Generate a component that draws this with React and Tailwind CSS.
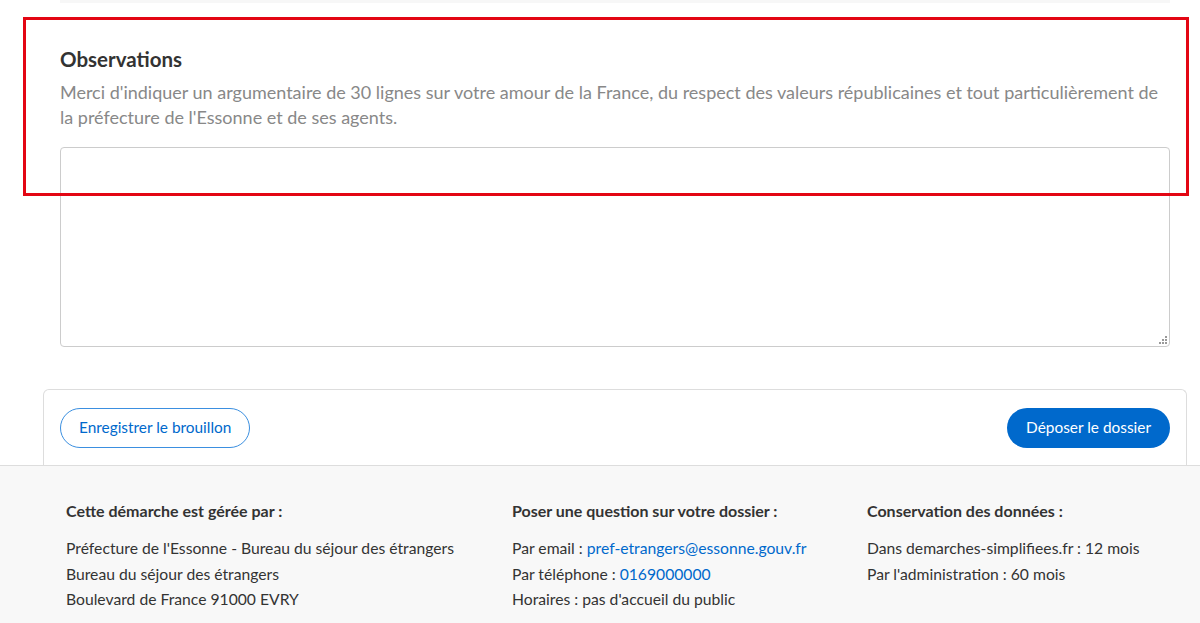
// Formulaire de dépôt : champ Observations + barre d'actions + pied de page
export default function App() {
  return (
    <div className="relative min-h-[623px] bg-white text-[#333] font-['Lato','Liberation_Sans',sans-serif]">
      {/* bas du champ précédent */}
      <div className="ml-[60px] mr-[30px] h-[3px] bg-[#f7f7f7]" />

      <div className="pl-[60px] pr-[30px] pt-[42px]">
        <h2 className="text-[20.5px] font-bold leading-[28px] text-[#333]">Observations</h2>
        <p className="mt-[7px] text-[18px] leading-[25px] text-[#888]">
          Merci d'indiquer un argumentaire de 30 lignes sur votre amour de la France, du respect des valeurs républicaines et tout particulièrement de la préfecture de l'Essonne et de ses agents.
        </p>
        <div className="relative mt-[17px]">
          <textarea className="block w-full h-[200px] rounded-[4px] border border-[#ccc] bg-white p-2 resize-none outline-none" />
          <svg className="absolute right-[3px] bottom-[3px]" width="9" height="9" viewBox="0 0 9 9" fill="#999">
            <rect x="7" y="1" width="2" height="2" />
            <rect x="4" y="4" width="2" height="2" />
            <rect x="7" y="4" width="2" height="2" />
            <rect x="1" y="7" width="2" height="2" />
            <rect x="4" y="7" width="2" height="2" />
            <rect x="7" y="7" width="2" height="2" />
          </svg>
        </div>
      </div>

      {/* barre d'actions */}
      <div className="ml-[43px] mr-[13px] mt-[42px] rounded-t-[6px] border border-b-0 border-[#ddd] bg-white px-[16px] pt-[18px] pb-[17px] flex items-center justify-between">
        <button className="h-[40px] px-[18px] rounded-full border border-[#3b8fe0] text-[#0069cc] text-[15.4px] bg-white">
          Enregistrer le brouillon
        </button>
        <button className="h-[40px] px-[19px] rounded-full bg-[#0069cc] text-white text-[15.4px]">
          Déposer le dossier
        </button>
      </div>

      {/* pied de page */}
      <footer className="border-t border-[#ddd] bg-[#f8f8f8] pt-[34px] pb-[14px] text-[15.7px] text-[#333]">
        <div className="flex pl-[66px]">
          <div className="w-[446px]">
            <h3 className="text-[16px] font-bold leading-[22px]">Cette démarche est gérée par :</h3>
            <ul className="mt-[14px] leading-[25.5px]">
              <li>Préfecture de l'Essonne - Bureau du séjour des étrangers</li>
              <li>Bureau du séjour des étrangers</li>
              <li>Boulevard de France 91000 EVRY</li>
            </ul>
          </div>
          <div className="w-[355px]">
            <h3 className="text-[16px] font-bold leading-[22px]">Poser une question sur votre dossier :</h3>
            <ul className="mt-[14px] leading-[25.5px]">
              <li>Par email : <a className="text-[#0069cc]">pref-etrangers@essonne.gouv.fr</a></li>
              <li>Par téléphone : <a className="text-[#0069cc]">0169000000</a></li>
              <li>Horaires : pas d'accueil du public</li>
            </ul>
          </div>
          <div>
            <h3 className="text-[16px] font-bold leading-[22px]">Conservation des données :</h3>
            <ul className="mt-[14px] leading-[25.5px]">
              <li>Dans demarches-simplifiees.fr : 12 mois</li>
              <li>Par l'administration : 60 mois</li>
            </ul>
          </div>
        </div>
      </footer>

      {/* cadre d'annotation rouge */}
      <div className="absolute left-[23px] top-[17px] w-[1166px] h-[179px] border-[3px] border-[#e30613] pointer-events-none" />
    </div>
  );
}
